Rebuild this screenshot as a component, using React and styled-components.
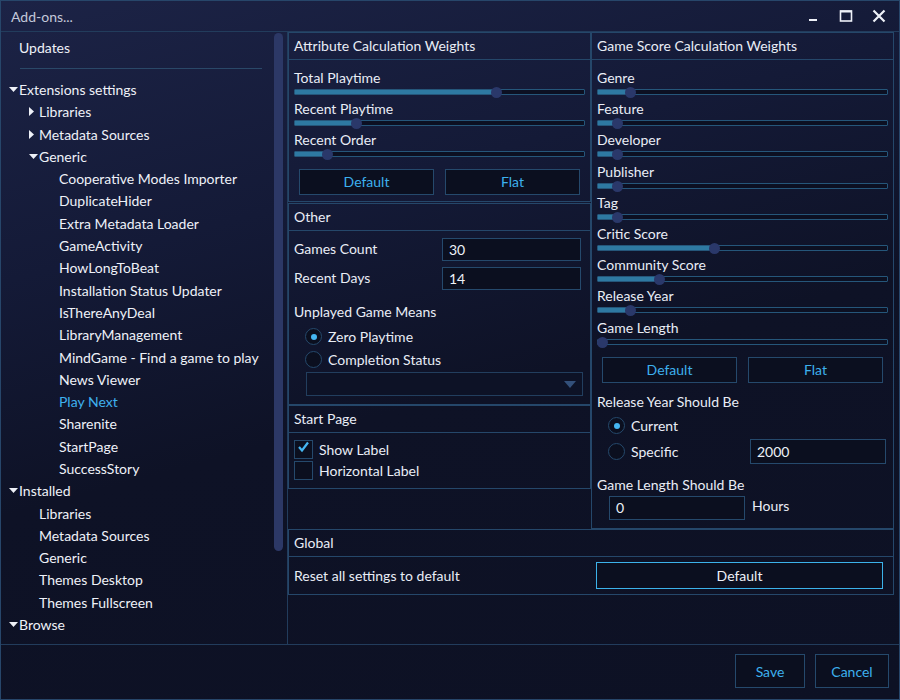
import styled, { createGlobalStyle } from 'styled-components';

const GlobalStyle = createGlobalStyle`
  html, body {
    margin: 0;
    padding: 0;
    background: #0d1124;
  }
  body {
    font-family: Lato, "Noto Sans", sans-serif;
    font-size: 14px;
    color: #e9edf6;
  }
  * {
    box-sizing: border-box;
  }
`;

const Window = styled.div`
  width: 900px;
  height: 700px;
  display: flex;
  flex-direction: column;
  border: 1px solid #27466a;
  background: linear-gradient(165deg, #1c2346 0%, #141a37 30%, #0e1226 55%, #0d1124 100%);
  overflow: hidden;
`;

const TitleBar = styled.div`
  height: 31px;
  flex-shrink: 0;
  display: flex;
  align-items: center;
  justify-content: space-between;
  padding: 0 4px 0 10px;
  border-bottom: 1px solid #223c5c;
  color: #c3c8da;
`;

const Controls = styled.div`
  display: flex;
  align-items: center;
  height: 100%;
`;

const ControlButton = styled.div`
  width: 33px;
  height: 100%;
  display: flex;
  align-items: center;
  justify-content: center;
`;

const Body = styled.div`
  flex: 1;
  display: flex;
  min-height: 0;
`;

const Sidebar = styled.div`
  width: 287px;
  flex-shrink: 0;
  display: flex;
  border-right: 1px solid #223c5c;
`;

const Tree = styled.div`
  flex: 1;
  padding-top: 4px;
`;

const ScrollThumb = styled.div`
  width: 9px;
  height: 518px;
  margin: 1px 4px 0 0;
  border-radius: 5px;
  background: #2c3866;
`;

const TreeRow = styled.div`
  height: 22.3px;
  display: flex;
  align-items: center;
  padding-left: ${(p) => 7 + p.$level * 20}px;
  color: ${(p) => (p.$active ? '#3fb0ee' : '#eef1f8')};
  white-space: nowrap;
`;

const ArrowSlot = styled.span`
  width: 11px;
  flex-shrink: 0;
  display: flex;
  align-items: center;
  padding-left: 1px;
`;

const TreeSeparator = styled.div`
  height: 1px;
  margin: 10px 12px 9px 19px;
  background: #2a4868;
`;

const Content = styled.div`
  flex: 1;
  display: grid;
  grid-template-columns: 303px 303px;
  grid-template-rows: 497px 66px;
  align-content: start;
`;

const Column = styled.div`
  display: flex;
  flex-direction: column;
`;

const Panel = styled.div`
  border: 1px solid #25476a;
  height: ${(p) => p.$height}px;
  margin-bottom: ${(p) => p.$gap || 0}px;
  display: flex;
  flex-direction: column;
  grid-column: ${(p) => (p.$wide ? '1 / 3' : 'auto')};
`;

const PanelHeader = styled.div`
  height: 27px;
  flex-shrink: 0;
  display: flex;
  align-items: center;
  padding: 0 0 2px 5px;
  border-bottom: 1px solid #25476a;
`;

const PanelBody = styled.div`
  padding: ${(p) => p.$pad || '8px 5px 0 5px'};
  display: flex;
  flex-direction: column;
`;

const SliderGroup = styled.div`
  display: flex;
  flex-direction: column;
  height: 31.2px;
`;

const SliderLabel = styled.div`
  height: 18px;
  line-height: 18px;
`;

const SliderTrack = styled.div`
  position: relative;
  height: 10px;
  display: flex;
  align-items: center;
`;

const TrackLine = styled.div`
  flex: 1;
  height: 6px;
  border: 1px solid #25567a;
  border-radius: 1px;
  background: #0c1022;
  overflow: hidden;
`;

const TrackFill = styled.div`
  height: 100%;
  background: #2e79a2;
`;

const Thumb = styled.div`
  position: absolute;
  top: 0;
  width: 11px;
  height: 11px;
  margin-left: -4px;
  border-radius: 50%;
  background: #2a386a;
`;

const ButtonRow = styled.div`
  display: grid;
  grid-template-columns: 1fr 1fr;
  column-gap: 11px;
  padding: ${(p) => p.$pad};
`;

const Button = styled.div`
  height: ${(p) => p.$h || 26}px;
  width: ${(p) => (p.$w ? `${p.$w}px` : 'auto')};
  display: flex;
  align-items: center;
  justify-content: center;
  background: #0b0f1f;
  border: 1px solid ${(p) => (p.$focused ? '#3cb2ea' : '#25496c')};
  color: ${(p) => (p.$focused ? '#eef1f8' : '#3db0ee')};
`;

const FieldRow = styled.div`
  display: grid;
  grid-template-columns: 148px 139px;
  align-items: center;
  margin-bottom: 6px;

  & > span {
    margin-top: -3px;
  }
`;

const Input = styled.div`
  height: ${(p) => p.$h || 23}px;
  width: ${(p) => (p.$w ? `${p.$w}px` : 'auto')};
  display: flex;
  align-items: center;
  padding-left: 6px;
  background: #0b0f1f;
  border: 1px solid #25496c;
  color: #eef1f8;
`;

const SectionLabel = styled.div`
  height: 18px;
  line-height: 18px;
  margin-top: ${(p) => p.$top || 0}px;
  margin-bottom: ${(p) => p.$bottom || 0}px;
`;

const RadioRow = styled.div`
  height: ${(p) => p.$h || 23}px;
  display: flex;
  align-items: center;
  padding-left: ${(p) => p.$indent}px;
`;

const RadioCircle = styled.span`
  width: 17px;
  height: 17px;
  flex-shrink: 0;
  border-radius: 50%;
  border: 1px solid #25496c;
  background: #0b0f1f;
  display: flex;
  align-items: center;
  justify-content: center;
  margin-right: 6px;

  &::after {
    content: '';
    width: 6px;
    height: 6px;
    border-radius: 50%;
    background: ${(p) => (p.$checked ? '#45b6f2' : 'transparent')};
  }
`;

const SpecificLabel = styled.span`
  width: 119px;
`;

const UnitLabel = styled.span`
  margin: -4px 0 0 7px;
`;

const Combo = styled.div`
  height: 24px;
  margin: 1px 7px 0 17px;
  border: 1px solid #223e5e;
  background: #0d1226;
  display: flex;
  align-items: center;
  justify-content: flex-end;
  padding-right: 6px;
`;

const CheckRow = styled.div`
  height: 20px;
  display: flex;
  align-items: center;
  margin-bottom: 1px;
`;

const CheckBox = styled.span`
  width: 19px;
  height: 19px;
  flex-shrink: 0;
  border: 1px solid #25496c;
  background: #0b0f1f;
  display: flex;
  align-items: flex-start;
  justify-content: center;
  margin-right: 6px;
`;

const GlobalRow = styled.div`
  display: grid;
  grid-template-columns: 302px 287px;
  align-items: center;
  padding: 5px 0 0 5px;
`;

const Footer = styled.div`
  height: 55px;
  flex-shrink: 0;
  border-top: 1px solid #223c5c;
  display: flex;
  justify-content: flex-end;
  align-items: flex-start;
  gap: 10px;
  padding: 9px 10px 0 0;
`;

const DownArrow = () => (
  <svg width="9" height="5" viewBox="0 0 9 5">
    <path d="M0 0 H9 L4.5 5 Z" fill="#eef1f8" />
  </svg>
);

const RightArrow = () => (
  <svg width="5" height="9" viewBox="0 0 5 9">
    <path d="M0 0 L5 4.5 L0 9 Z" fill="#eef1f8" />
  </svg>
);

const treeTop = [
  { label: 'Extensions settings', level: 0, arrow: 'down' },
  { label: 'Libraries', level: 1, arrow: 'right' },
  { label: 'Metadata Sources', level: 1, arrow: 'right' },
  { label: 'Generic', level: 1, arrow: 'down' },
  { label: 'Cooperative Modes Importer', level: 2 },
  { label: 'DuplicateHider', level: 2 },
  { label: 'Extra Metadata Loader', level: 2 },
  { label: 'GameActivity', level: 2 },
  { label: 'HowLongToBeat', level: 2 },
  { label: 'Installation Status Updater', level: 2 },
  { label: 'IsThereAnyDeal', level: 2 },
  { label: 'LibraryManagement', level: 2 },
  { label: 'MindGame - Find a game to play', level: 2 },
  { label: 'News Viewer', level: 2 },
  { label: 'Play Next', level: 2, active: true },
  { label: 'Sharenite', level: 2 },
  { label: 'StartPage', level: 2 },
  { label: 'SuccessStory', level: 2 },
  { label: 'Installed', level: 0, arrow: 'down' },
  { label: 'Libraries', level: 1 },
  { label: 'Metadata Sources', level: 1 },
  { label: 'Generic', level: 1 },
  { label: 'Themes Desktop', level: 1 },
  { label: 'Themes Fullscreen', level: 1 },
  { label: 'Browse', level: 0, arrow: 'down' },
];

const attributeSliders = [
  { label: 'Total Playtime', value: 69 },
  { label: 'Recent Playtime', value: 21 },
  { label: 'Recent Order', value: 11 },
];

const scoreSliders = [
  { label: 'Genre', value: 11 },
  { label: 'Feature', value: 6.5 },
  { label: 'Developer', value: 6.5 },
  { label: 'Publisher', value: 6.5 },
  { label: 'Tag', value: 6.5 },
  { label: 'Critic Score', value: 40 },
  { label: 'Community Score', value: 21 },
  { label: 'Release Year', value: 11 },
  { label: 'Game Length', value: 1.5 },
];

function Slider({ label, value }) {
  return (
    <SliderGroup>
      <SliderLabel>{label}</SliderLabel>
      <SliderTrack>
        <TrackLine>
          <TrackFill style={{ width: `${value}%` }} />
        </TrackLine>
        <Thumb style={{ left: `${value}%` }} />
      </SliderTrack>
    </SliderGroup>
  );
}

function App() {
  return (
    <>
      <GlobalStyle />
      <Window>
        <TitleBar>
          <span>Add-ons...</span>
          <Controls>
            <ControlButton>
              <svg width="12" height="12" viewBox="0 0 12 12">
                <rect x="2" y="9" width="8" height="2" fill="#eef1f8" />
              </svg>
            </ControlButton>
            <ControlButton>
              <svg width="14" height="14" viewBox="0 0 14 14">
                <rect x="1.5" y="2" width="11" height="10" fill="none" stroke="#eef1f8" strokeWidth="1.6" />
                <rect x="1" y="1.5" width="12" height="2" fill="#eef1f8" />
              </svg>
            </ControlButton>
            <ControlButton>
              <svg width="14" height="14" viewBox="0 0 14 14">
                <path d="M1.5 1.5 L12.5 12.5 M12.5 1.5 L1.5 12.5" stroke="#eef1f8" strokeWidth="2.2" />
              </svg>
            </ControlButton>
          </Controls>
        </TitleBar>
        <Body>
          <Sidebar>
            <Tree>
              <TreeRow $level={0}>
                <ArrowSlot />
                Updates
              </TreeRow>
              <TreeSeparator />
              {treeTop.map((item, i) => (
                <TreeRow key={i} $level={item.level} $active={item.active}>
                  <ArrowSlot>
                    {item.arrow === 'down' && <DownArrow />}
                    {item.arrow === 'right' && <RightArrow />}
                  </ArrowSlot>
                  {item.label}
                </TreeRow>
              ))}
            </Tree>
            <ScrollThumb />
          </Sidebar>
          <Content>
            <Column>
              <Panel $height={170} $gap={1}>
                <PanelHeader>Attribute Calculation Weights</PanelHeader>
                <PanelBody $pad="9px 5px 0 5px">
                  {attributeSliders.map((s) => (
                    <Slider key={s.label} {...s} />
                  ))}
                </PanelBody>
                <ButtonRow $pad="6px 10px 0 10px">
                  <Button>Default</Button>
                  <Button>Flat</Button>
                </ButtonRow>
              </Panel>
              <Panel $height={202}>
                <PanelHeader>Other</PanelHeader>
                <PanelBody $pad="7px 5px 0 5px">
                  <FieldRow>
                    <span>Games Count</span>
                    <Input>30</Input>
                  </FieldRow>
                  <FieldRow>
                    <span>Recent Days</span>
                    <Input>14</Input>
                  </FieldRow>
                  <SectionLabel $top={7} $bottom={4}>Unplayed Game Means</SectionLabel>
                  <RadioRow $indent={11}>
                    <RadioCircle $checked />
                    Zero Playtime
                  </RadioRow>
                  <RadioRow $indent={11}>
                    <RadioCircle />
                    Completion Status
                  </RadioRow>
                </PanelBody>
                <Combo>
                  <svg width="12" height="7" viewBox="0 0 12 7">
                    <path d="M0 0 H12 L6 7 Z" fill="#33507a" />
                  </svg>
                </Combo>
              </Panel>
              <Panel $height={84}>
                <PanelHeader>Start Page</PanelHeader>
                <PanelBody $pad="6px 5px 0 5px">
                  <CheckRow>
                    <CheckBox>
                      <svg width="13" height="12" viewBox="0 0 13 12">
                        <path d="M2 6 L5 9.5 L11 1.5" fill="none" stroke="#45b6f2" strokeWidth="2.2" />
                      </svg>
                    </CheckBox>
                    Show Label
                  </CheckRow>
                  <CheckRow>
                    <CheckBox />
                    Horizontal Label
                  </CheckRow>
                </PanelBody>
              </Panel>
            </Column>
            <Panel $height={497}>
              <PanelHeader>Game Score Calculation Weights</PanelHeader>
              <PanelBody $pad="9px 5px 0 5px">
                {scoreSliders.map((s) => (
                  <Slider key={s.label} {...s} />
                ))}
              </PanelBody>
              <ButtonRow $pad="7px 10px 0 10px">
                <Button>Default</Button>
                <Button>Flat</Button>
              </ButtonRow>
              <PanelBody $pad="10px 5px 0 5px">
                <SectionLabel $bottom={3}>Release Year Should Be</SectionLabel>
                <RadioRow $indent={11} $h={24}>
                  <RadioCircle $checked />
                  Current
                </RadioRow>
                <RadioRow $indent={11} $h={28}>
                  <RadioCircle />
                  <SpecificLabel>Specific</SpecificLabel>
                  <Input $h={25} $w={136}>2000</Input>
                </RadioRow>
                <SectionLabel $top={10} $bottom={1}>Game Length Should Be</SectionLabel>
                <RadioRow $indent={12} $h={26}>
                  <Input $h={24} $w={136}>0</Input>
                  <UnitLabel>Hours</UnitLabel>
                </RadioRow>
              </PanelBody>
            </Panel>
            <Panel $height={66} $wide>
              <PanelHeader>Global</PanelHeader>
              <GlobalRow>
                <span>Reset all settings to default</span>
                <Button $focused $h={27}>Default</Button>
              </GlobalRow>
            </Panel>
          </Content>
        </Body>
        <Footer>
          <Button $h={34} $w={70}>Save</Button>
          <Button $h={34} $w={74}>Cancel</Button>
        </Footer>
      </Window>
    </>
  );
}

export default App;
